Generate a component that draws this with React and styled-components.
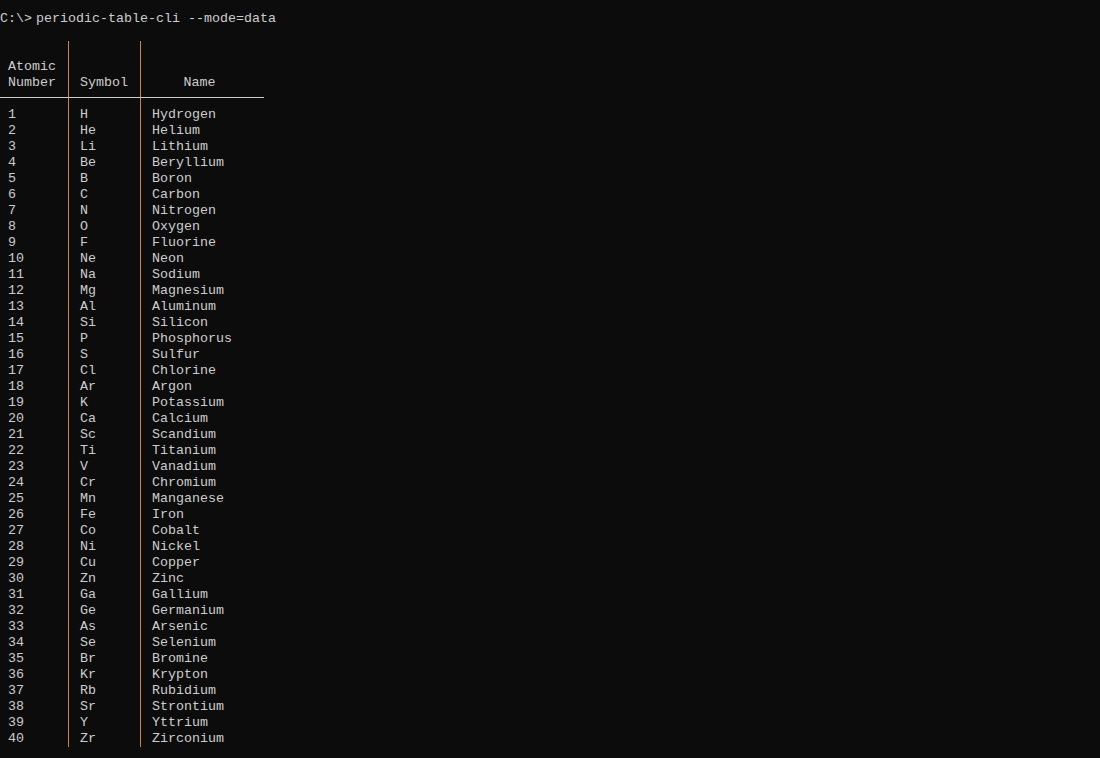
import React from "react";
import styled, { createGlobalStyle } from "styled-components";

const Global = createGlobalStyle`
  html, body { margin: 0; padding: 0; background: #0c0c0c; }
  body { font-family: "Liberation Mono", "DejaVu Sans Mono", monospace; }
`;

const Terminal = styled.div`
  background: #0c0c0c;
  color: #cccccc;
  width: 1100px;
  height: 758px;
  box-sizing: border-box;
  padding-top: 11px;
  font-family: "Liberation Mono", "DejaVu Sans Mono", monospace;
  font-size: 13.33px;
  line-height: 16px;
  overflow: hidden;
`;

const Prompt = styled.div`
  display: flex;
  height: 16px;
  margin-bottom: 14px;
  white-space: pre;
`;

const Cmd = styled.span`
  margin-left: 4px;
`;

const Table = styled.table`
  border-collapse: collapse;
  border-spacing: 0;
`;

const Th = styled.th`
  font-weight: normal;
  vertical-align: bottom;
  text-align: ${(p) => p.$align || "left"};
  padding: 18px ${(p) => p.$pr || 12}px 6px ${(p) => p.$pl}px;
  width: ${(p) => p.$w}px;
  border-bottom: 1px solid #cccccc;
  border-right: ${(p) => (p.$last ? "none" : "1px solid #c8843c")};
  white-space: pre;
`;

const Td = styled.td`
  padding: ${(p) => (p.$first ? "9px" : "0")} 12px 0 ${(p) => p.$pl}px;
  height: 16px;
  border-right: ${(p) => (p.$last ? "none" : "1px solid #c8843c")};
  white-space: pre;
  vertical-align: top;
`;

const elements = [
  ["H", "Hydrogen"], ["He", "Helium"], ["Li", "Lithium"], ["Be", "Beryllium"],
  ["B", "Boron"], ["C", "Carbon"], ["N", "Nitrogen"], ["O", "Oxygen"],
  ["F", "Fluorine"], ["Ne", "Neon"], ["Na", "Sodium"], ["Mg", "Magnesium"],
  ["Al", "Aluminum"], ["Si", "Silicon"], ["P", "Phosphorus"], ["S", "Sulfur"],
  ["Cl", "Chlorine"], ["Ar", "Argon"], ["K", "Potassium"], ["Ca", "Calcium"],
  ["Sc", "Scandium"], ["Ti", "Titanium"], ["V", "Vanadium"], ["Cr", "Chromium"],
  ["Mn", "Manganese"], ["Fe", "Iron"], ["Co", "Cobalt"], ["Ni", "Nickel"],
  ["Cu", "Copper"], ["Zn", "Zinc"], ["Ga", "Gallium"], ["Ge", "Germanium"],
  ["As", "Arsenic"], ["Se", "Selenium"], ["Br", "Bromine"], ["Kr", "Krypton"],
  ["Rb", "Rubidium"], ["Sr", "Strontium"], ["Y", "Yttrium"], ["Zr", "Zirconium"],
];

export default function App() {
  return (
    <Terminal>
      <Global />
      <Prompt>
        <span>C:\&gt;</span>
        <Cmd>periodic-table-cli --mode=data</Cmd>
      </Prompt>
      <Table>
        <thead>
          <tr>
            <Th $pl={8} $w={48}>{"Atomic\nNumber"}</Th>
            <Th $pl={11} $w={48}>Symbol</Th>
            <Th $pl={11} $pr={17} $w={95} $align="center" $last>Name</Th>
          </tr>
        </thead>
        <tbody>
          {elements.map(([sym, name], i) => (
            <tr key={sym}>
              <Td $pl={8} $first={i === 0}>{i + 1}</Td>
              <Td $pl={11} $first={i === 0}>{sym}</Td>
              <Td $pl={11} $first={i === 0} $last>{name}</Td>
            </tr>
          ))}
        </tbody>
      </Table>
    </Terminal>
  );
}
